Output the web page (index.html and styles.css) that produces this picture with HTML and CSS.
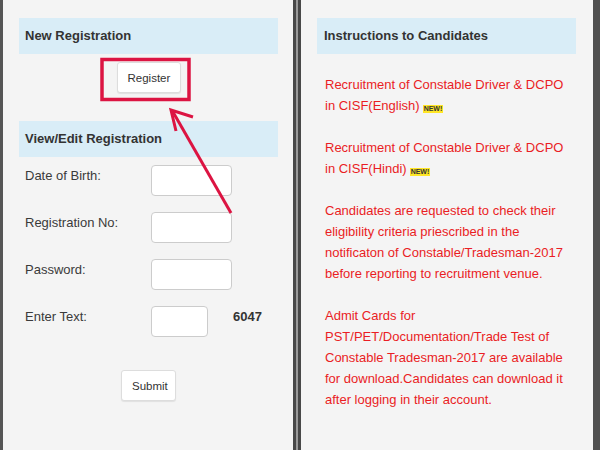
FILE: index.html
```html
<!DOCTYPE html>
<html lang="en">
<head>
    <meta charset="UTF-8">
    <title>CISF Recruitment</title>
    <link rel="stylesheet" href="styles.css">
</head>
<body>
    <div class="screens">

        <div class="phone phone-left">
            <div class="panel-heading">New Registration</div>
            <div class="center">
                <button class="btn btn-register">Register</button>
            </div>

            <div class="panel-heading heading-edit">View/Edit Registration</div>
            <div class="form">
                <div class="row">
                    <label>Date of Birth:</label>
                    <input type="text" class="field">
                </div>
                <div class="row">
                    <label>Registration No:</label>
                    <input type="text" class="field">
                </div>
                <div class="row">
                    <label>Password:</label>
                    <input type="password" class="field">
                </div>
                <div class="row">
                    <label>Enter Text:</label>
                    <input type="text" class="field field-small">
                    <span class="captcha">6047</span>
                </div>
            </div>
            <div class="center">
                <button class="btn btn-submit">Submit</button>
            </div>
        </div>

        <div class="phone phone-right">
            <div class="panel-heading">Instructions to Candidates</div>
            <div class="notes">
                <p>Recruitment of Constable Driver &amp; DCPO<br>in CISF(English)<span class="new">NEW!</span></p>
                <p>Recruitment of Constable Driver &amp; DCPO<br>in CISF(Hindi)<span class="new">NEW!</span></p>
                <p>Candidates are requested to check their eligibility criteria priescribed in the notificaton of Constable/Tradesman-2017 before reporting to recruitment venue.</p>
                <p>Admit Cards for PST/PET/Documentation/Trade Test of Constable Tradesman-2017 are available for download.Candidates can download it after logging in their account.</p>
            </div>
        </div>

    </div>

    <!-- annotation drawn over the screenshot -->
    <svg class="mark" width="600" height="450" viewBox="0 0 600 450">
        <rect x="102" y="59.5" width="87" height="40" fill="none" stroke="#dc1442" stroke-width="3.5"/>
        <line x1="231" y1="213" x2="173" y2="112" stroke="#dc1442" stroke-width="3"/>
        <polyline points="193,117 171,110 176,131" fill="none" stroke="#dc1442" stroke-width="3" stroke-linejoin="miter"/>
    </svg>
</body>
</html>
```

FILE: styles.css
```css
body {
    margin: 0;
    font-family: "Liberation Sans", Arial, sans-serif;
    font-size: 13px;
    background-color: #9a9a9a;
    overflow: hidden;
}

.screens {
    display: flex;
    gap: 2px;
    height: 450px;
}

.phone {
    background-color: #f4f4f4;
    box-sizing: border-box;
    height: 450px;
    padding-top: 18px;
}

.phone-left {
    width: 296px;
    border-left: 3px solid #555;
    border-right: 3px solid #484848;
    padding-left: 16px;
    padding-right: 15px;
}

.phone-right {
    width: 302px;
    border-left: 3px solid #484848;
    border-right: 7px solid #505050;
    padding-left: 16px;
    padding-right: 17px;
}

.panel-heading {
    background-color: #d9edf7;
    color: #333;
    font-weight: bold;
    height: 36px;
    line-height: 36px;
    padding-left: 6px;
}

.phone-right .panel-heading {
    padding-left: 7px;
}

.heading-edit {
    margin-top: 28px;
}

.center {
    text-align: center;
}

.btn {
    background: #fff;
    border: 1px solid #ddd;
    border-radius: 3px;
    box-shadow: 0 1px 1px rgba(0, 0, 0, 0.08);
    color: #333;
    font-family: inherit;
    font-size: 11.5px;
    height: 31px;
    padding: 0 10px;
}

.btn-register {
    margin-top: 8px;
    width: 64px;
}

.btn-submit {
    margin-top: 33px;
    width: 55px;
}

.form {
    padding: 8px 0 0 6px;
}

.row {
    display: flex;
    align-items: flex-start;
    margin-bottom: 16px;
}

.row:last-child {
    margin-bottom: 0;
}

label {
    width: 126px;
    padding-top: 1px;
    line-height: 20px;
    color: #3a3a3a;
}

.field {
    width: 81px;
    height: 31px;
    box-sizing: border-box;
    border: 1px solid #ccc;
    border-radius: 4px;
    background: #fff;
    margin: 0;
}

.field-small {
    width: 57px;
}

.captcha {
    margin-left: 25px;
    padding-top: 1px;
    line-height: 20px;
    font-weight: bold;
    color: #333;
}

.notes {
    padding: 20px 6px 0 8px;
    color: #ea1d24;
}

.notes p {
    margin: 0 0 21px;
    line-height: 21px;
}

.new {
    display: inline-block;
    background: #ffe626;
    color: #333;
    font-size: 7px;
    font-weight: bold;
    line-height: 8px;
    padding: 0 1px;
    margin-left: 3px;
    vertical-align: -1px;
}

.mark {
    position: absolute;
    left: 0;
    top: 0;
    pointer-events: none;
}
```
